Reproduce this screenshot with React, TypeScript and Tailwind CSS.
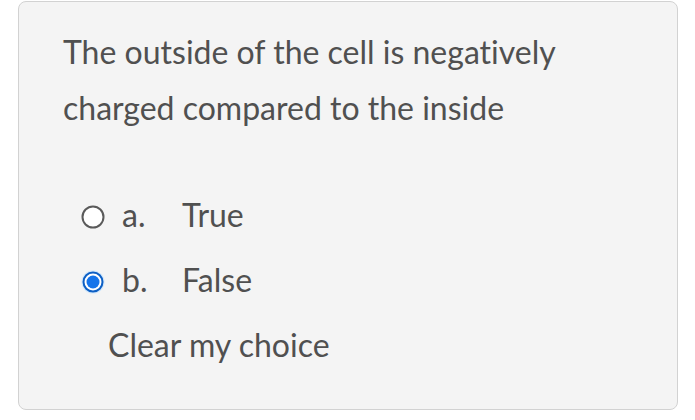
type Option = {
  letter: string;
  label: string;
  checked: boolean;
};

const options: Option[] = [
  { letter: "a.", label: "True", checked: false },
  { letter: "b.", label: "False", checked: true },
];

function Radio({ checked }: { checked: boolean }) {
  if (!checked) {
    return (
      <svg width="24" height="24" viewBox="0 0 24 24" className="shrink-0">
        <circle cx="12" cy="12" r="10.5" fill="#ffffff" stroke="#5a5a5a" strokeWidth="2" />
      </svg>
    );
  }
  return (
    <svg width="24" height="24" viewBox="0 0 24 24" className="shrink-0">
      <circle cx="12" cy="12" r="11.5" fill="#cfe6fb" />
      <circle cx="12" cy="12" r="9.5" fill="#ffffff" stroke="#0d5fc4" strokeWidth="2" />
      <circle cx="12" cy="12" r="6.5" fill="#1574ea" />
    </svg>
  );
}

export default function App() {
  return (
    <div
      className="min-h-[420px] bg-white pt-px pl-[18px] [font-variant-ligatures:none]"
      style={{ fontFamily: "Lato, sans-serif" }}
    >
      <div className="w-[660px] rounded-lg border border-[#d2d2d2] bg-[#f4f4f4] pt-[22px] pb-[32px] pl-[44px] text-[32px] text-[#505050]">
        <p className="leading-[56px]">
          The outside of the cell is negatively
          <br />
          charged compared to the inside
        </p>
        <div className="mt-[46px]">
          {options.map((o) => (
            <label key={o.letter} className="ml-[18px] flex h-[65px] items-center">
              <span className="mt-[5px]">
                <Radio checked={o.checked} />
              </span>
              <span className="ml-[17px] w-[60px]">{o.letter}</span>
              <span>{o.label}</span>
            </label>
          ))}
          <div className="ml-[45px] flex h-[65px] items-center pt-px">Clear my choice</div>
        </div>
      </div>
    </div>
  );
}
